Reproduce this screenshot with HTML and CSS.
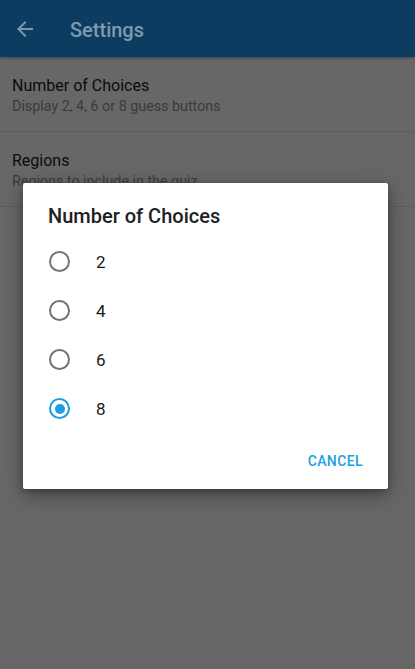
FILE: index.html
```html
<!DOCTYPE html>
<html>
<head>
<meta charset="utf-8">
<link rel="stylesheet" href="styles.css">
</head>
<body>
<div class="screen">
  <header class="appbar">
    <svg class="back" width="24" height="24" viewBox="0 0 24 24"><path d="M20 11H7.83l5.59-5.59L12 4l-8 8 8 8 1.41-1.41L7.83 13H20v-2z" fill="#7d94a9"/></svg>
    <span class="appbar-title">Settings</span>
  </header>
  <div class="pref">
    <div class="pref-title">Number of Choices</div>
    <div class="pref-sub">Display 2, 4, 6 or 8 guess buttons</div>
  </div>
  <div class="pref">
    <div class="pref-title">Regions</div>
    <div class="pref-sub">Regions to include in the quiz</div>
  </div>

  <div class="dialog">
    <div class="dialog-title">Number of Choices</div>
    <div class="options">
      <div class="option"><span class="radio"></span><span class="label">2</span></div>
      <div class="option"><span class="radio"></span><span class="label">4</span></div>
      <div class="option"><span class="radio"></span><span class="label">6</span></div>
      <div class="option"><span class="radio checked"></span><span class="label">8</span></div>
    </div>
    <div class="actions"><span class="btn">CANCEL</span></div>
  </div>
</div>
</body>
</html>
```
FILE: styles.css
```css
* { box-sizing: border-box; }
html, body { margin: 0; padding: 0; }
body { font-family: Roboto, "Noto Sans", sans-serif; }
.screen {
  position: relative;
  width: 415px;
  height: 669px;
  background: #676767;
  overflow: hidden;
}
.appbar {
  height: 57px;
  background: #0d3c61;
  display: flex;
  align-items: center;
  padding-left: 13px;
  box-shadow: 0 1px 3px rgba(0,0,0,0.35);
  position: relative;
}
.back { flex: none; margin-top: 1px; }
.appbar-title {
  margin-left: 33px;
  font-size: 20px;
  font-weight: 500;
  color: #8199ae;
  margin-top: 2px;
}
.pref {
  height: 75px;
  padding: 19px 12px 0;
  border-bottom: 1px solid #5d5d5d;
}
.pref-title {
  font-size: 16px;
  line-height: 20px;
  color: #0b0b0b;
}
.pref-sub {
  font-size: 14.3px;
  line-height: 20px;
  color: #3b3b3b;
}
.dialog {
  position: absolute;
  left: 23px;
  top: 183px;
  width: 365px;
  height: 306px;
  background: #fff;
  border-radius: 2px;
  box-shadow: 0 6px 20px rgba(0,0,0,0.35), 0 2px 6px rgba(0,0,0,0.25);
  padding: 21px 0 0 25px;
  display: flex;
  flex-direction: column;
}
.dialog-title {
  font-size: 20px;
  font-weight: 500;
  line-height: 24px;
  color: #212121;
}
.options {
  margin-top: 9px;
  display: flex;
  flex-direction: column;
}
.option {
  height: 49px;
  display: flex;
  align-items: center;
}
.radio {
  width: 21px;
  height: 21px;
  border: 2px solid #737373;
  border-radius: 50%;
  margin-left: 1px;
  display: flex;
  align-items: center;
  justify-content: center;
}
.radio.checked { border-color: #1d9ee2; }
.radio.checked::after {
  content: "";
  width: 10px;
  height: 10px;
  border-radius: 50%;
  background: #1d9ee2;
}
.label {
  margin-left: 26px;
  font-size: 17px;
  color: #1a1a1a;
}
.actions {
  display: flex;
  justify-content: flex-end;
  padding-right: 25px;
  margin-top: 20px;
}
.btn {
  font-size: 14px;
  font-weight: 500;
  color: #1d9ee2;
  letter-spacing: 0.4px;
}
```
